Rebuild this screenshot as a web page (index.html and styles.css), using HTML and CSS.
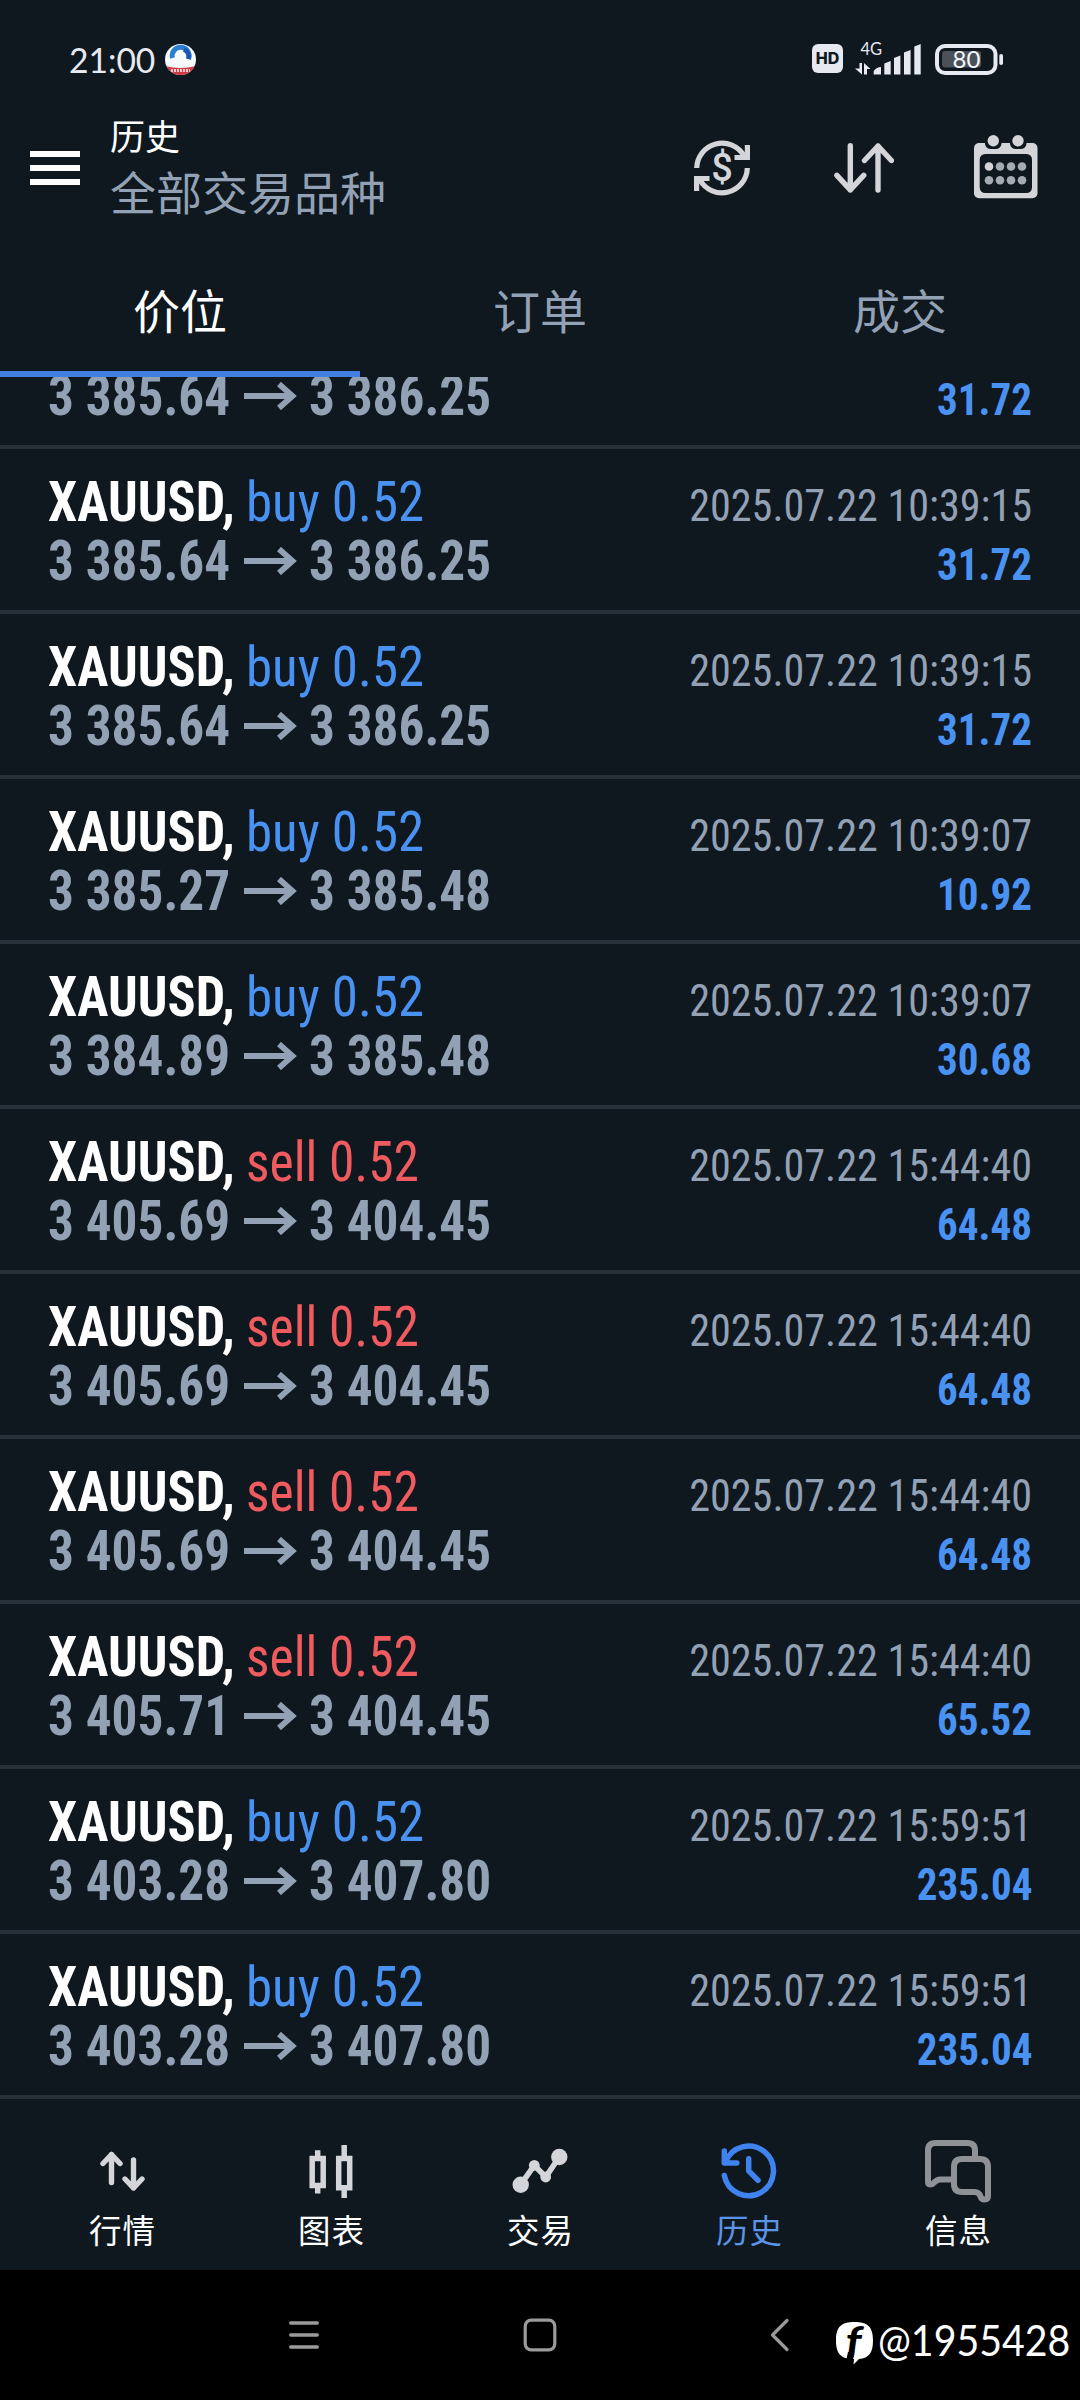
FILE: index.html
```html
<!DOCTYPE html>
<html lang="zh-CN">
<head>
<meta charset="utf-8">
<title>历史</title>
<link rel="stylesheet" href="styles.css">
</head>
<body>
<div class="statusbar">
  <span class="clock">21:00</span>
  <svg class="app-dot" width="31" height="31" viewBox="0 0 31 31">
    <defs><clipPath id="disc"><circle cx="15.5" cy="15.5" r="15.5"/></clipPath></defs>
    <g clip-path="url(#disc)">
      <rect width="31" height="31" fill="#f6fafd"/>
      <path d="M7.500 14a8.500 8.500 0 1 1 16 1" fill="none" stroke="#2b7ed0" stroke-width="5"/>
      <path d="M19 5.500a8.500 8.500 0 0 1 4.500 9.500" fill="none" stroke="#1b55b4" stroke-width="4.500"/>
      <path d="M0 22q15.500 4 31 0v10H0z" fill="#cf3b42"/>
      <path d="M6 26.500h19" stroke="#f3c9cb" stroke-width="3" stroke-dasharray="2 1"/>
    </g>
  </svg>
  <span class="hd">HD</span>
  <svg class="signal" width="66" height="36" viewBox="0 0 66 36" fill="#e6e9ef">
    <text x="5.500" y="14.500" class="net">4G</text>
    <path d="M4.500 23h2.500v11.500L0 28.500h4.500zM9 34.500V23l6.500 6H12v5.500z"/>
    <path d="M18.700 34.500v-3.500q3-4 7.300-4v7.500zM29.300 34.500V23.500l6.400-2.500v13.500zM39 34.500V18l6.400-2.500v19zM49 34.500V12.500l6.600-2.500v24.500zM59.300 34.500V6.500L65.700 4v30.500z"/>
  </svg>
  <svg class="battery" width="68" height="31" viewBox="0 0 68 31">
    <rect x="2" y="2" width="58.500" height="27" rx="8" fill="none" stroke="#e6e9ef" stroke-width="4"/>
    <rect x="7" y="7" width="39" height="16.500" rx="3" fill="#4a5159"/>
    <rect x="64.300" y="10" width="3.700" height="11" rx="1.800" fill="#e6e9ef"/>
    <text x="31.500" y="24" text-anchor="middle" class="level" fill="#f4f6fa">80</text>
  </svg>
</div>

<header class="header">
  <svg class="burger" width="50" height="34" viewBox="0 0 50 34" fill="#fff"><path d="M0 0h50v6H0zM0 14h50v6H0zM0 28h50v6H0z"/></svg>
  <div class="titles">
    <div class="title">历史</div>
    <div class="subtitle">全部交易品种</div>
  </div>
  <div class="actions">
    <svg width="56" height="56" viewBox="0 0 56 56" fill="none" stroke="#d3d5d9" stroke-width="5.200">
      <path d="M2.700 28A25.300 25.300 0 0 1 50 16M53.400 5v12.500H40.500"/>
      <path d="M53.300 28A25.300 25.300 0 0 1 6 40M2.600 51V38.500h12.900"/>
      <path d="M46 17.500h8v-7M10 38.500H2v7" stroke-width="3"/>
      <text x="28" y="41" text-anchor="middle" class="dollar" fill="#d3d5d9" stroke="none">$</text>
    </svg>
    <svg width="60" height="50" viewBox="0 0 60 50" fill="none" stroke="#d3d5d9" stroke-width="5.400" stroke-linecap="round" stroke-linejoin="round">
      <path d="M16.300 2.700V47M2.900 32.300l13.400 14.500 13.400-14.500M44 47V3M30.500 17.500 44 3l13.400 14.500"/>
    </svg>
    <svg width="64" height="64" viewBox="0 0 64 64" fill="#d3d5d9">
      <rect y="8" width="63.500" height="55.300" rx="5"/>
      <rect x="5.700" y="19" width="52.300" height="39" rx="5.500" fill="#0f171f"/>
      <path d="M11 7v2q1 5 6 5h4.500q5 0 6-5V7zM36 7v2q1 5 6 5h4.500q5 0 6-5V7z" fill="#0f171f"/>
      <circle cx="19.300" cy="5.800" r="5.700"/><circle cx="44" cy="5.800" r="5.700"/>
      <circle cx="15" cy="31.500" r="4.300"/>
      <g fill="#a5abb2"><circle cx="26" cy="31.500" r="4.300"/><circle cx="37" cy="31.500" r="4.300"/><circle cx="48" cy="31.500" r="4.300"/><circle cx="15" cy="45.300" r="4.300"/><circle cx="26" cy="45.300" r="4.300"/><circle cx="37" cy="45.300" r="4.300"/><circle cx="48" cy="45.300" r="4.300"/></g>
    </svg>
  </div>
</header>

<nav class="tabs">
  <div class="tab active">价位</div>
  <div class="tab">订单</div>
  <div class="tab">成交</div>
</nav>

<svg width="0" height="0" class="defs"><symbol id="arrow" viewBox="0 0 53 28"><path d="M0 14h49M35 2l13.500 12L35 26" fill="none" stroke="#93a1b5" stroke-width="5.800"/></symbol></svg>

<main class="list">
  <div class="row partial"><div class="line"><b class="price">3 385.64</b><svg class="arrow"><use href="#arrow"/></svg><b class="price">3 386.25</b><b class="profit">31.72</b></div></div>
  <div class="row"><div class="line"><b class="symbol">XAUUSD,</b><span class="side buy">buy 0.52</span><span class="date">2025.07.22 10:39:15</span></div><div class="line"><b class="price">3 385.64</b><svg class="arrow"><use href="#arrow"/></svg><b class="price">3 386.25</b><b class="profit">31.72</b></div></div>
  <div class="row"><div class="line"><b class="symbol">XAUUSD,</b><span class="side buy">buy 0.52</span><span class="date">2025.07.22 10:39:15</span></div><div class="line"><b class="price">3 385.64</b><svg class="arrow"><use href="#arrow"/></svg><b class="price">3 386.25</b><b class="profit">31.72</b></div></div>
  <div class="row"><div class="line"><b class="symbol">XAUUSD,</b><span class="side buy">buy 0.52</span><span class="date">2025.07.22 10:39:07</span></div><div class="line"><b class="price">3 385.27</b><svg class="arrow"><use href="#arrow"/></svg><b class="price">3 385.48</b><b class="profit">10.92</b></div></div>
  <div class="row"><div class="line"><b class="symbol">XAUUSD,</b><span class="side buy">buy 0.52</span><span class="date">2025.07.22 10:39:07</span></div><div class="line"><b class="price">3 384.89</b><svg class="arrow"><use href="#arrow"/></svg><b class="price">3 385.48</b><b class="profit">30.68</b></div></div>
  <div class="row"><div class="line"><b class="symbol">XAUUSD,</b><span class="side sell">sell 0.52</span><span class="date">2025.07.22 15:44:40</span></div><div class="line"><b class="price">3 405.69</b><svg class="arrow"><use href="#arrow"/></svg><b class="price">3 404.45</b><b class="profit">64.48</b></div></div>
  <div class="row"><div class="line"><b class="symbol">XAUUSD,</b><span class="side sell">sell 0.52</span><span class="date">2025.07.22 15:44:40</span></div><div class="line"><b class="price">3 405.69</b><svg class="arrow"><use href="#arrow"/></svg><b class="price">3 404.45</b><b class="profit">64.48</b></div></div>
  <div class="row"><div class="line"><b class="symbol">XAUUSD,</b><span class="side sell">sell 0.52</span><span class="date">2025.07.22 15:44:40</span></div><div class="line"><b class="price">3 405.69</b><svg class="arrow"><use href="#arrow"/></svg><b class="price">3 404.45</b><b class="profit">64.48</b></div></div>
  <div class="row"><div class="line"><b class="symbol">XAUUSD,</b><span class="side sell">sell 0.52</span><span class="date">2025.07.22 15:44:40</span></div><div class="line"><b class="price">3 405.71</b><svg class="arrow"><use href="#arrow"/></svg><b class="price">3 404.45</b><b class="profit">65.52</b></div></div>
  <div class="row"><div class="line"><b class="symbol">XAUUSD,</b><span class="side buy">buy 0.52</span><span class="date">2025.07.22 15:59:51</span></div><div class="line"><b class="price">3 403.28</b><svg class="arrow"><use href="#arrow"/></svg><b class="price">3 407.80</b><b class="profit">235.04</b></div></div>
  <div class="row"><div class="line"><b class="symbol">XAUUSD,</b><span class="side buy">buy 0.52</span><span class="date">2025.07.22 15:59:51</span></div><div class="line"><b class="price">3 403.28</b><svg class="arrow"><use href="#arrow"/></svg><b class="price">3 407.80</b><b class="profit">235.04</b></div></div>
</main>

<nav class="bottom">
  <div class="item">
    <svg width="66" height="64" viewBox="0 0 66 64" fill="none" stroke="#d3d5d9" stroke-width="5.400" stroke-linecap="round" stroke-linejoin="round"><path d="M22.500 42.500V14.500M14 23.500l8.500-9 8.500 9M44.500 20v28M36 39l8.500 9 8.500-9"/></svg>
    <span>行情</span>
  </div>
  <div class="item">
    <svg width="66" height="64" viewBox="0 0 66 64" fill="none" stroke="#d3d5d9" stroke-width="5.500"><path d="M14.200 18.500h11v27h-11zM40.700 18.500h11v29.200h-11zM19.700 10.300v8M19.700 46v7.500M46.200 5v13M46.200 48v10"/></svg>
    <span>图表</span>
  </div>
  <div class="item">
    <svg width="66" height="64" viewBox="0 0 66 64" fill="#d3d5d9"><path d="M13.700 44.700l13.600-19.400 11.400 11.700 13.600-20" fill="none" stroke="#d3d5d9" stroke-width="5.600"/><circle cx="13.700" cy="44.700" r="8.200"/><circle cx="27.300" cy="25.300" r="5.400"/><circle cx="38.700" cy="37" r="5.400"/><circle cx="52.300" cy="17" r="8.200"/></svg>
    <span>交易</span>
  </div>
  <div class="item current">
    <svg width="66" height="64" viewBox="0 0 66 64" fill="none" stroke="#3f83ee" stroke-width="5.500" stroke-linecap="round" stroke-linejoin="round"><path d="M8.300 35.500A24.800 24.800 0 1 0 9.500 22M8.300 11v12h12.500M32.700 18.700v12.200l9.300 9.400"/></svg>
    <span>历史</span>
  </div>
  <div class="item">
    <svg width="66" height="64" viewBox="0 0 66 64" fill="none" stroke="#8e9297" stroke-width="6" stroke-linejoin="round"><path d="M50 17v-6.500q0-7.500-7.500-7.500H10.500Q3 3 3 10.500V42q0 3.500 4.500 2Q12 39.500 15 39.500h13"/><path d="M29 27q0-8 8-8h18q8 0 8 8v29q0 3.500-3.500 3.500-3 0-4-3-1.500-4.500-6-4.500H37q-8 0-8-8z"/></svg>
    <span>信息</span>
  </div>
</nav>

<footer class="system">
  <svg width="30" height="34" viewBox="0 0 30 34" stroke="#9b9b9b" stroke-width="3.300" stroke-linecap="round"><path d="M1.700 5h26.600M1.700 17h26.600M1.700 29h26.600"/></svg>
  <svg width="34" height="34" viewBox="0 0 34 34" fill="none" stroke="#9b9b9b" stroke-width="3.200"><rect x="2.200" y="2.200" width="29.600" height="29.600" rx="6"/></svg>
  <svg width="20" height="34" viewBox="0 0 20 34" fill="none" stroke="#9b9b9b" stroke-width="3.200" stroke-linecap="round" stroke-linejoin="round"><path d="M17 2.500 2.500 17 17 31.500"/></svg>
  <div class="watermark">
    <svg width="38" height="43" viewBox="0 0 38 43"><path d="M18.500 0C32 0 37 5 37 18.500 37 31 33 36 23 37L17.500 42.500 18 37C5 37 0 32 0 18.500 0 5 5 0 18.500 0z" fill="#fff"/><text transform="translate(9.500 34.500) scale(1.150 1)" class="mark">f</text><path d="M12 30l6.500-1-2 10-6-2z" fill="#000"/></svg>
    <span class="handle">@1955428</span>
  </div>
</footer>
</body>
</html>
```
FILE: styles.css
```css
* { box-sizing: border-box; }
body {
  margin: 0;
  width: 1080px;
  height: 2400px;
  overflow: hidden;
  display: flex;
  flex-direction: column;
  background: #0f171f;
  color: #fff;
  font-family: Roboto, "Noto Sans CJK SC", sans-serif;
}
svg { display: block; flex: none; }
.defs { display: none; }

.statusbar {
  height: 100px;
  flex: none;
  display: flex;
  align-items: flex-start;
  padding: 44px 0 0 69px;
}
.clock {
  width: 96px;
  margin-top: -6px;
  font: 400 35px/42px Lato, sans-serif;
  color: #e6e9ef;
  transform: scaleX(.96);
  transform-origin: left;
}
.hd {
  margin: 0 12px 0 616px;
  width: 31px;
  height: 29px;
  border-radius: 6px;
  background: #e6e9ef;
  color: #0f171f;
  font: 800 16px/29px Inter, sans-serif;
  text-align: center;
}
.signal { margin-top: -4px; }
.net { font: 400 16.500px Lato, sans-serif; }
.battery { margin-left: 14px; }
.level { font: 400 24px Lato, sans-serif; }

.header {
  height: 148px;
  flex: none;
  display: flex;
  padding: 13px 42px 0 30px;
}
.burger { margin-top: 38px; }
.titles {
  margin-left: 30px;
  font-family: "Noto Sans CJK SC", sans-serif;
  font-weight: 400;
}
.title { font-size: 35px; line-height: 44px; }
.subtitle { font-size: 46px; line-height: 66px; color: #93a1b5; }
.actions {
  margin-left: auto;
  height: 110px;
  display: flex;
  align-items: center;
}
.actions svg:nth-child(2) { margin: 0 80px 0 84px; }
.actions svg:nth-child(3) { margin-top: -2px; }
.dollar { font: 500 38px Roboto, sans-serif; }

.tabs { height: 129px; flex: none; display: flex; }
.tab {
  flex: 1;
  height: 129px;
  padding-top: 26px;
  border-bottom: 6px solid transparent;
  font: 400 47px/70px "Noto Sans CJK SC", sans-serif;
  color: #93a1b5;
  text-align: center;
}
.tab.active { color: #fff; border-color: #437fe3; }

.list {
  height: 1722px;
  flex: none;
  overflow: hidden;
  display: flex;
  flex-direction: column;
  justify-content: flex-end;
}
.row {
  height: 165px;
  flex: none;
  padding: 24px 48px 0;
  border-bottom: 4px solid #29303a;
  font: 400 56px/58.500px "Roboto Condensed", Roboto, sans-serif;
}
/* topmost row, scrolled partly under the tabs */
.row.partial { height: 82.500px; padding-top: 0; }
.line {
  height: 58.500px;
  display: flex;
  align-items: baseline;
  white-space: pre;
}
.symbol, .price, .side { flex: none; transform-origin: left; }
.symbol { width: 198px; transform: scaleX(.932); }
.side { transform: scaleX(.945); }
.buy { color: #4a92f2; }
.sell { color: #ef5b5e; transform: scaleX(.92); }
.date, .profit {
  margin-left: auto;
  font-size: 44.500px;
  transform-origin: right;
}
.date { color: #93a1b5; transform: scaleX(.947); }
.price { width: 196px; color: #93a1b5; transform: scaleX(.915); }
.arrow {
  width: 53px;
  height: 28px;
  margin-right: 12px;
  align-self: center;
}
.profit { color: #4a92f2; transform: scaleX(.922); }

.bottom {
  height: 171px;
  flex: none;
  display: flex;
  padding: 41px 17px 0 18px;
}
.item {
  flex: 1;
  display: flex;
  flex-direction: column;
  align-items: center;
  font: 400 32.500px/48px "Noto Sans CJK SC", sans-serif;
  letter-spacing: 1px;
}
.item svg { margin-right: 2px; }
.item span { margin-top: 1px; }
.current { color: #5b94e6; }

.system {
  position: relative;
  height: 130px;
  flex: none;
  display: flex;
  align-items: center;
  padding-left: 289px;
  background: #000;
}
.system > svg:nth-child(2) { margin-left: 204px; }
.system > svg:nth-child(3) { margin-left: 213px; }
.watermark {
  position: absolute;
  left: 836px;
  top: 52px;
  display: flex;
  color: #fff;
}
.mark { font: italic 700 42px Lato, sans-serif; fill: #000; }
.handle {
  margin: -8px 0 0 4px;
  font: 400 42px/52px Lato, sans-serif;
  transform: scaleX(.935);
  transform-origin: left;
}
```
